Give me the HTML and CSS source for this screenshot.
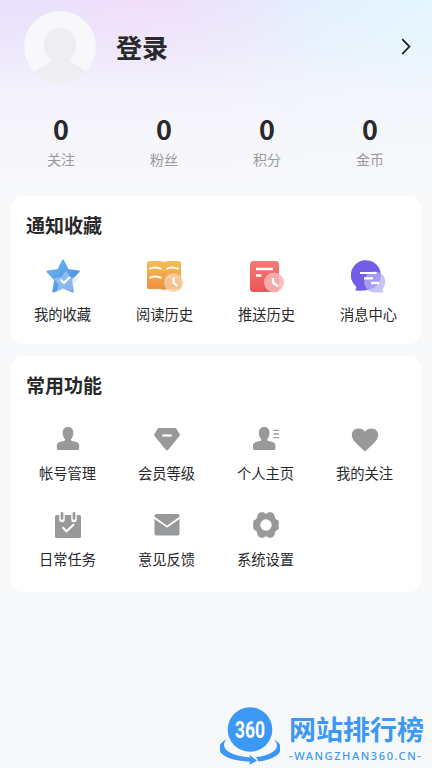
FILE: index.html
```html
<!DOCTYPE html>
<html lang="zh-CN">
<head>
<meta charset="utf-8">
<title>我的</title>
<link rel="stylesheet" href="styles.css">
</head>
<body>
<main class="page">
  <header class="profile">
    <svg class="avatar" viewBox="0 0 72 72">
      <defs><clipPath id="face"><circle cx="36" cy="36" r="36"/></clipPath></defs>
      <circle cx="36" cy="36" r="36" fill="#f8f8fb"/>
      <path clip-path="url(#face)" fill="#eeeef1" d="M36 17c10 0 16 7 16 16 0 7-3 12-6 15 1 4 5 5 10 8 4 2 6 5 6 9v7H9v-7c1-5 4-7 9-9 5-3 8-4 9-8-4-3-7-8-7-15 0-9 6-16 16-16z"/>
    </svg>
    <h1 class="login">登录</h1>
    <svg class="chevron" viewBox="0 0 10 18"><path d="M1.2 1.2 8.4 8.6 1.2 16.2" fill="none" stroke="#222328" stroke-width="1.8"/></svg>
  </header>

  <section class="stats">
    <div class="stat"><b>0</b><span>关注</span></div>
    <div class="stat"><b>0</b><span>粉丝</span></div>
    <div class="stat"><b>0</b><span>积分</span></div>
    <div class="stat"><b>0</b><span>金币</span></div>
  </section>

  <section class="card notices">
    <h2>通知收藏</h2>
    <div class="grid">
      <div class="item">
        <svg viewBox="0 0 36 36">
          <defs>
            <linearGradient id="star" x1="0" y1="0" x2="1" y2="1"><stop offset="0" stop-color="#6fbaf2"/><stop offset="1" stop-color="#4385df"/></linearGradient>
          </defs>
          <path d="M18 2.500 22.700 12l11 1.600-7.800 7.800 1.900 12.100L18 29.300 8.300 33.500l1.900-11.600L2.300 13.600 13.300 12z" fill="url(#star)" stroke="url(#star)" stroke-width="2" stroke-linejoin="round"/>
          <path d="m21 12.500 4 6.500 8.500 1.500-5.500 6 1 7.500-8.500-2.500-9 2.500 2-7.500-5-6 8-1.500z" fill="#c5d9fb" opacity=".5"/>
          <path d="m15.500 21.500 3.500 3.500 6-6.300" fill="none" stroke="#fff" stroke-width="2.100"/>
        </svg>
        <span>我的收藏</span>
      </div>
      <div class="item">
        <svg viewBox="0 0 36 36">
          <defs><linearGradient id="book" x1="0" y1="0" x2="0" y2="1"><stop offset="0" stop-color="#f4bd55"/><stop offset="1" stop-color="#f09042"/></linearGradient></defs>
          <path d="M0 5q0-2 3-2h9q3 0 5 1 2-1 5-1h9q3 0 3 2v25q0 1-3 1h-9q-3 0-5 1-2-1-5-1H2q-2 0-2-1z" fill="url(#book)"/>
          <path d="M2.500 11q5-3 12 0M19.500 11q5-3 12 0M2.500 20q5-3 12 0M19.500 20q5-3 12 0" fill="none" stroke="#fff" stroke-width="2"/>
          <circle cx="26.500" cy="24.500" r="9.500" fill="#f8caa0" opacity=".85"/>
          <path d="M26.500 19.500v5l3.800 3.500" fill="none" stroke="#fff" stroke-width="2.200"/>
        </svg>
        <span>阅读历史</span>
      </div>
      <div class="item">
        <svg viewBox="0 0 36 36">
          <defs><linearGradient id="doc" x1="0" y1="0" x2="0" y2="1"><stop offset="0" stop-color="#f27b76"/><stop offset="1" stop-color="#ef5356"/></linearGradient></defs>
          <rect x="1" y="3" width="29" height="31" rx="3.500" fill="url(#doc)"/>
          <path d="M7 11h17M7 17.500h5.500" stroke="#fff" stroke-width="2.600"/>
          <circle cx="25" cy="24.500" r="10" fill="#f7b7b7" opacity=".86"/>
          <path d="M24 20v4.500l5 4" fill="none" stroke="#fff" stroke-width="2.300"/>
        </svg>
        <span>推送历史</span>
      </div>
      <div class="item">
        <svg viewBox="0 0 36 36">
          <defs><linearGradient id="chat" x1="0" y1="0" x2="1" y2="1"><stop offset="0" stop-color="#745de5"/><stop offset="1" stop-color="#765fe6"/></linearGradient></defs>
          <path d="M4 32.500q2-2 1-4A15 15 0 1 1 17 32q-6 1-13 .5z" fill="url(#chat)"/>
          <path d="M32.500 34.500q-1-1-.5-4A10.500 10.500 0 1 0 24 34.500z" fill="#b5b2fa" opacity=".75"/>
          <path d="M9 15h16.500M13 20.300h9" stroke="#fff" stroke-width="2.200"/>
          <path d="M20 25h8" stroke="#fff" stroke-width="2.400"/>
        </svg>
        <span>消息中心</span>
      </div>
    </div>
  </section>

  <section class="card features">
    <h2>常用功能</h2>
    <div class="grid">
      <div class="item">
        <svg viewBox="0 0 28 28"><path d="M14 2c3.700 0 5.300 2.500 5.300 5.500 0 3-1 5.500-2.500 7 .2 1.500 2 1.600 5 2.300 2.500.7 3.400 2 3.400 4.200v2.500q0 1.500-1.500 1.500H4.300q-1.500 0-1.500-1.500V21c0-2.200 1-3.500 3.400-4.200 3-.7 4.800-.8 5-2.300-1.500-1.500-2.500-4-2.500-7C8.700 4.500 10.300 2 14 2z"/></svg>
        <span>帐号管理</span>
      </div>
      <div class="item">
        <svg viewBox="0 0 28 28"><path d="M6 3h16q1 0 1.600 1l3 5q.7 1-.2 2.100L15.200 24.800q-1.200 1.200-2.400 0L1.600 11.100q-.9-1.100-.2-2.100l3-5Q5 3 6 3z"/><path d="M9.300 10.500h9.400" stroke="#fff" stroke-width="2.200"/></svg>
        <span>会员等级</span>
      </div>
      <div class="item">
        <svg viewBox="0 0 28 28"><path d="M12.200 2c3.700 0 5.300 2.500 5.300 5.500 0 3-1 5.500-2.500 7 .2 1.500 2 1.600 5 2.300 2.500.7 3.400 2 3.400 4.200v2.500q0 1.500-1.500 1.500H2.500Q1 25 1 23.500V21c0-2.200 1-3.500 3.400-4.200 3-.7 4.800-.8 5-2.300-1.500-1.500-2.500-4-2.500-7C6.900 4.500 8.500 2 12.200 2z"/><path d="M21.500 5.300h5.500M21.500 9h5.500M21.500 12.700h5.500" stroke="#98999b" stroke-width="1.300"/></svg>
        <span>个人主页</span>
      </div>
      <div class="item">
        <svg viewBox="0 0 28 28"><path d="M14 26.500Q12 25 4 17C-1.500 11.500.5 3.500 7.500 3.500q4 0 6.500 3.200 2.500-3.200 6.500-3.200c7 0 9 8 3.500 13.500q-8 8-10 9.500z"/></svg>
        <span>我的关注</span>
      </div>
      <div class="item">
        <svg viewBox="0 0 28 28"><rect x="1" y="4" width="26" height="23" rx="1.500"/><path d="M8 1.500v7M20 1.500v7" stroke="#fff" stroke-width="5.500" stroke-linecap="round"/><path d="M8 2.500v5M20 2.500v5" stroke="#98999b" stroke-width="2.800" stroke-linecap="round"/><path d="m8.500 16.300 4 4 7.500-7" fill="none" stroke="#fff" stroke-width="2.200"/></svg>
        <span>日常任务</span>
      </div>
      <div class="item">
        <svg viewBox="0 0 28 28"><rect x="1.500" y="3" width="25" height="21.500" rx="1.800"/><path d="m1 6.500 13 9.200 13-9.200" fill="none" stroke="#fff" stroke-width="1.900"/></svg>
        <span>意见反馈</span>
      </div>
      <div class="item">
        <svg viewBox="0 0 28 28"><path fill-rule="evenodd" d="M9 1.200h2.300q1 0 1.400 1.200h2.600q.4-1.200 1.400-1.200H19q3.300.8 3.800 4.300.2 2.200 1.500 3 2.300.5 2.500 2.200v6.600q-.2 1.700-2.500 2.200-1.300.8-1.500 3-.5 3.500-3.800 4.300h-2.300q-1 0-1.400-1.200h-2.600q-.4 1.200-1.400 1.200H9q-3.300-.8-3.800-4.300-.2-2.200-1.500-3-2.300-.5-2.500-2.200v-6.600q.2-1.700 2.500-2.200 1.300-.8 1.500-3Q5.700 2 9 1.200zM14 8.300a5.700 5.700 0 1 0 0 11.400 5.700 5.700 0 0 0 0-11.400z"/></svg>
        <span>系统设置</span>
      </div>
    </div>
  </section>

  <footer class="brand">
    <svg class="globe" viewBox="0 0 60 60">
      <circle cx="30" cy="24.500" r="22.300" fill="#3b98f5"/>
      <path d="M6.500 34.500C-1 43 9 50.500 30 52.500l-.5-2.800 7.500 6-7.500 4 .5-3C2 56-10 43 6.500 34.500zM54 34.500c8 8-1 15.500-18 17.500l2.500 4.500C60 54 68 42 54 34.500z" fill="#3b98f5"/>
      <text x="30" y="33" text-anchor="middle" textLength="30" lengthAdjust="spacingAndGlyphs">360</text>
    </svg>
    <div class="brand-text">
      <strong>网站排行榜</strong>
      <small>-WANGZHAN360.CN-</small>
    </div>
  </footer>
</main>
</body>
</html>
```
FILE: styles.css
```css
* { box-sizing: border-box; }

body {
  margin: 0;
  background: #f7f8fa;
  color: #29292b;
  font-family: "Noto Sans CJK SC", sans-serif;
}

.page {
  display: flex;
  flex-direction: column;
  height: 768px;
  padding: 0 11px;
  overflow: hidden;
  background:
    linear-gradient(to bottom, rgba(246, 247, 251, 0) 0, rgba(246, 247, 251, .3) 50px, rgba(246, 246, 252, .85) 95px, #f7f8fa 180px),
    radial-gradient(ellipse 80px 80px at 138px 0, #f3defb, rgba(243, 222, 251, 0)),
    linear-gradient(to right, #e9e1fc 0, #eae0fb 130px, #ebe5fb 230px, #e3f0fe 320px, #e4f6ff 432px);
}

.profile {
  display: flex;
  align-items: center;
  height: 94px;
  padding: 0 10px 0 13px;
}

.avatar { width: 72px; height: 72px; }

.login {
  flex: 1;
  margin: 0 0 0 20px;
  font-size: 26px;
  line-height: 38px;
  font-weight: 700;
}

.chevron { width: 10px; height: 18px; }

.stats {
  display: grid;
  grid-template-columns: repeat(4, 103px);
  height: 102px;
  margin-left: -1.5px;
  padding-top: 19px;
}

.stat {
  display: flex;
  flex-direction: column;
  align-items: center;
}

.stat b { font-size: 27px; line-height: 32px; }
.stat span { margin-top: 4px; font-size: 14px; line-height: 20px; color: #99999b; }

.card {
  width: 410px;
  border-radius: 12px;
  background: #fff;
}

.card h2 {
  margin: 0;
  padding-left: 15px;
  font-size: 19px;
  line-height: 28px;
  font-weight: 700;
}

.grid { display: grid; }

.item {
  display: flex;
  flex-direction: column;
  align-items: center;
  font-size: 14.3px;
  line-height: 20px;
}

.notices { height: 148px; padding-top: 15px; }
.notices .grid { grid-template-columns: repeat(4, 102px); margin: 19px 0 0 .5px; }
.notices .item svg { width: 36px; height: 36px; margin-bottom: 10px; }

.features { height: 236px; margin-top: 12px; padding-top: 15px; }
.features .grid {
  grid-template-columns: repeat(4, 99px);
  grid-auto-rows: 86px;
  margin: 26px 0 0 7px;
}
.features .item svg { width: 28px; height: 28px; margin-bottom: 10px; fill: #98999b; }

.brand {
  display: flex;
  align-items: flex-start;
  width: 212px;
  margin: 113px -11px 0 auto;
}

.globe { flex: none; width: 60px; height: 60px; }
.globe text { font: 700 24px "Roboto", sans-serif; fill: #fff; }

.brand-text {
  display: flex;
  flex-direction: column;
  margin: 4px 0 0 9px;
  white-space: nowrap;
  color: #3b98f5;
}

.brand-text strong { font-size: 27px; line-height: 40px; }
.brand-text small {
  font: 500 11px/14px "Noto Sans", sans-serif;
  letter-spacing: 1.6px;
}
```
